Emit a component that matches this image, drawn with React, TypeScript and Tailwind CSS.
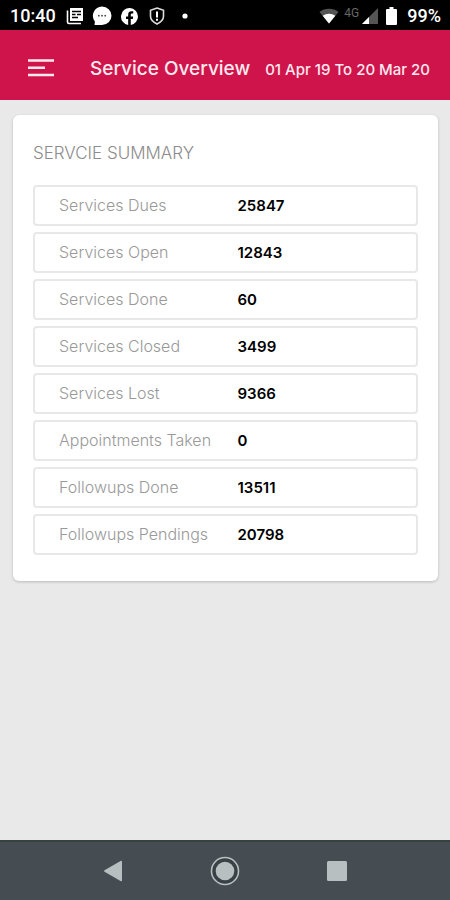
import { useState } from 'react';

const SERVICES = [
    { label: 'Services Dues', value: 25847 },
    { label: 'Services Open', value: 12843 },
    { label: 'Services Done', value: 60 },
    { label: 'Services Closed', value: 3499 },
    { label: 'Services Lost', value: 9366 },
    { label: 'Appointments Taken', value: 0 },
    { label: 'Followups Done', value: 13511 },
    { label: 'Followups Pendings', value: 20798 },
];

function StatusBar() {
    return (
        <div className="flex h-[30px] items-center justify-between bg-black pl-[10px] pr-[9px] pt-[2px] font-['Roboto',sans-serif] text-white">
            <div className="flex items-center">
                <span className="text-lg leading-5 font-medium">10:40</span>
                {/* news */}
                <svg className="ml-[10px] h-[18px] w-[18px]" viewBox="0 0 18 18" fill="none">
                    <path d="M4 1h13v13H4z" fill="#fff" />
                    <path d="M1.500 3.500v11.500a1.500 1.500 0 0 0 1.500 1.500h12" stroke="#fff" strokeWidth="1.600" />
                    <path d="M6 4.500h9M6 7.500h3.500M11 7.500h4M6 10.500h6" stroke="#000" strokeWidth="1.300" />
                </svg>
                {/* chat */}
                <svg className="ml-2 h-5 w-5" viewBox="0 0 20 20">
                    <path d="M10 .5a9.500 9.200 0 1 1 0 18.400H2.500l.4-3.400A9.300 9.300 0 0 1 10 .5z" fill="#fff" />
                    <circle cx="6.800" cy="9.700" r=".9" fill="#444" />
                    <circle cx="10" cy="9.700" r=".9" fill="#444" />
                    <circle cx="13.200" cy="9.700" r=".9" fill="#444" />
                </svg>
                {/* facebook */}
                <svg className="ml-[9px] h-[17px] w-[17px]" viewBox="0 0 24 24" fill="#fff">
                    <path d="M24 12a12 12 0 1 0-13.900 11.900v-8.400h-3V12h3V9.400c0-3 1.800-4.700 4.500-4.700 1.300 0 2.700.2 2.700.2v3h-1.500c-1.500 0-2 .9-2 1.900V12h3.400l-.5 3.500h-2.900v8.400A12 12 0 0 0 24 12z" />
                </svg>
                {/* shield */}
                <svg className="ml-[11px] h-[18px] w-4" viewBox="0 0 16 18" fill="none">
                    <path d="M8 1 14.500 3.300v6c0 3.300-3 6-6.500 7.700C4.500 15.300 1.500 12.600 1.500 9.300v-6z" stroke="#ddd" strokeWidth="1.600" />
                    <path d="M8 4.500v6M8 11.700v2" stroke="#fff" strokeWidth="2" />
                </svg>
                <svg className="ml-[17px] h-[6px] w-[6px]" viewBox="0 0 6 6">
                    <circle cx="3" cy="3" r="2.600" fill="#fff" />
                </svg>
            </div>
            <div className="flex items-center">
                {/* wifi */}
                <svg className="h-4 w-5" viewBox="0 0 20 16">
                    <path d="M10 15.500.5 4C6-.2 14-.2 19.500 4z" fill="#555" />
                    <path d="M10 15.500 3.700 7.800c3.700-2.900 8.900-2.900 12.600 0z" fill="#fff" />
                </svg>
                <span className="mb-[7px] ml-[5px] text-xs leading-3 text-[#666]">4G</span>
                {/* signal */}
                <svg className="ml-[3px] h-4 w-4" viewBox="0 0 16 16">
                    <path d="M0 16 16 0v16z" fill="#555" />
                    <path d="M0 16 7 9v7z" fill="#fff" />
                </svg>
                {/* battery */}
                <svg className="ml-2 h-[18px] w-[11px]" viewBox="0 0 11 18" fill="#fff">
                    <path d="M3.500 0h4v2H10a1 1 0 0 1 1 1v14a1 1 0 0 1-1 1H1a1 1 0 0 1-1-1V3a1 1 0 0 1 1-1h2.500z" />
                </svg>
                <span className="ml-[10px] text-lg leading-5 font-medium">99%</span>
            </div>
        </div>
    );
}

function Header({ onMenu }: { onMenu: () => void }) {
    return (
        <header className="flex h-[70px] items-center justify-between bg-[#cf144b] pr-5 pl-7 pt-2 text-[#ffe9ef]">
            <button type="button" aria-label="Menu" onClick={onMenu}>
                <svg className="h-5 w-[26px]" viewBox="0 0 26 20" stroke="currentColor" strokeWidth="2.600">
                    <path d="M0 1.500h26M0 8.700h17M0 16h26" />
                </svg>
            </button>
            <div className="ml-9 flex flex-1 items-baseline justify-between">
                <h1 className="text-[19px] font-medium whitespace-nowrap">Service Overview</h1>
                <span className="text-[15px] font-medium whitespace-nowrap">01 Apr 19 To 20 Mar 20</span>
            </div>
        </header>
    );
}

function NavBar() {
    return (
        <nav className="flex h-[60px] items-center justify-center gap-[87px] border-t-2 border-[#35413f] bg-[#454d52] text-[#b8bfc0]">
            <button type="button" aria-label="Back">
                <svg className="h-[22px] w-5" viewBox="0 0 20 22" fill="currentColor">
                    <path d="M1.500 10.300 18 .8q1-.5 1 .6v19.200q0 1.100-1 .6L1.500 11.700q-1-.7 0-1.400z" />
                </svg>
            </button>
            <button type="button" aria-label="Home">
                <svg className="h-[30px] w-[30px]" viewBox="0 0 30 30">
                    <circle cx="15" cy="15" r="13.500" fill="#384145" stroke="currentColor" strokeWidth="1.600" />
                    <circle cx="15" cy="15" r="9.300" fill="currentColor" />
                </svg>
            </button>
            <button type="button" aria-label="Recent apps">
                <svg className="h-5 w-5" viewBox="0 0 20 20" fill="currentColor">
                    <rect width="20" height="20" rx="1.500" />
                </svg>
            </button>
        </nav>
    );
}

export default function App() {
    const [menuOpen, setMenuOpen] = useState(false);

    return (
        <div className="flex min-h-screen flex-col bg-[#e9e9e9] font-['Inter',sans-serif]">
            <StatusBar />
            <Header onMenu={() => setMenuOpen(!menuOpen)} />

            <main className="flex-1 pt-[15px] pr-3 pl-[13px]">
                <section className="rounded-md bg-white px-5 pt-[26px] pb-[26px] shadow-[0_1px_3px_rgba(0,0,0,0.2)]">
                    <h2 className="text-[17px] leading-6 font-light text-[#8c8c8c]">SERVCIE SUMMARY</h2>
                    <dl className="mt-5 flex flex-col gap-[6px]">
                        {SERVICES.map((item) => (
                            <div
                                key={item.label}
                                className="grid h-[41px] grid-cols-2 content-center items-baseline rounded border-2 border-[#e8e8e8] pl-6"
                            >
                                <dt className="text-base font-light whitespace-nowrap text-[#999]">{item.label}</dt>
                                <dd className="text-[15px] font-semibold text-black">{item.value}</dd>
                            </div>
                        ))}
                    </dl>
                </section>
            </main>

            <NavBar />
        </div>
    );
}
